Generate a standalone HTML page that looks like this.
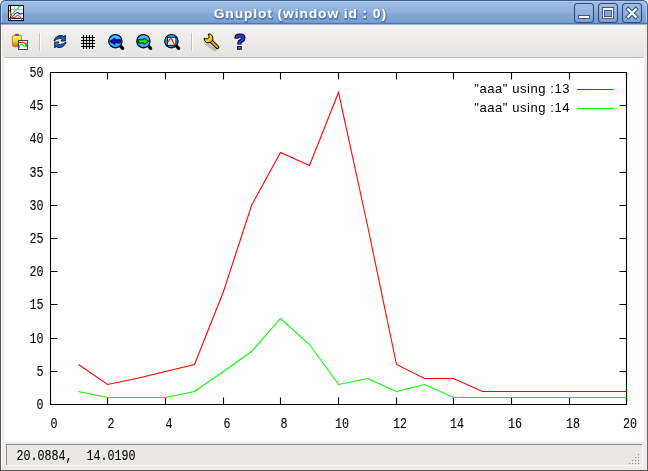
<!DOCTYPE html>
<html><head><meta charset="utf-8">
<style>
html,body{margin:0;padding:0;width:648px;height:471px;overflow:hidden;background:#fff}
svg{display:block;will-change:transform}
</style></head>
<body>
<svg width="648" height="471" viewBox="0 0 648 471">
<defs>
<linearGradient id="tb" x1="0" y1="0" x2="0" y2="1">
<stop offset="0" stop-color="#9dbde6"/>
<stop offset="0.5" stop-color="#8fb0dc"/>
<stop offset="0.55" stop-color="#84a8d7"/>
<stop offset="1" stop-color="#7a9fd1"/>
</linearGradient>
<linearGradient id="tool" x1="0" y1="0" x2="0" y2="1">
<stop offset="0" stop-color="#f4f3f1"/>
<stop offset="1" stop-color="#e4e3e0"/>
</linearGradient>
<linearGradient id="btn" x1="0" y1="0" x2="0" y2="1">
<stop offset="0" stop-color="#a3c0e8"/>
<stop offset="1" stop-color="#7b9fd2"/>
</linearGradient>
<linearGradient id="clip" x1="0" y1="0" x2="0" y2="1">
<stop offset="0" stop-color="#fbf27a"/>
<stop offset="0.45" stop-color="#f4d820"/>
<stop offset="1" stop-color="#d8640a"/>
</linearGradient>
<radialGradient id="lens" cx="0.5" cy="0.45" r="0.55">
<stop offset="0" stop-color="#38a8f8"/>
<stop offset="0.6" stop-color="#4cb6ff"/>
<stop offset="0.85" stop-color="#2294ee"/>
<stop offset="1" stop-color="#1478d0"/>
</radialGradient>
<linearGradient id="refr" x1="0" y1="0" x2="0" y2="1">
<stop offset="0" stop-color="#0a3fb0"/>
<stop offset="1" stop-color="#1a7cff"/>
</linearGradient>
<linearGradient id="refr2" x1="0" y1="1" x2="0" y2="0">
<stop offset="0" stop-color="#0a3fb0"/>
<stop offset="0.7" stop-color="#1a7cff"/>
<stop offset="1" stop-color="#20c0ff"/>
</linearGradient>
<linearGradient id="wr" x1="0" y1="0" x2="1" y2="1">
<stop offset="0" stop-color="#fff200"/>
<stop offset="0.6" stop-color="#ffd000"/>
<stop offset="1" stop-color="#f7a400"/>
</linearGradient>
</defs>
<!-- window frame background -->
<rect x="0" y="0" width="648" height="471" fill="#edecea"/>
<!-- title bar -->
<path d="M0 24V5.5Q0 0 5.5 0H642.5Q648 0 648 5.5V24Z" fill="#3f5f8a"/>
<path d="M1 24V6Q1 1 6 1H642Q647 1 647 6V24Z" fill="#aecaee"/>
<path d="M2 23V7Q2 2 7 2H641Q646 2 646 7V23Z" fill="url(#tb)"/>
<rect x="1" y="22" width="646" height="1" fill="#7097cb"/>
<rect x="1" y="23" width="646" height="1" fill="#4f76ad"/>
<rect x="1" y="24" width="646" height="1" fill="#a3b9d8"/>
<path d="M0 0H5.5Q0 0 0 5.5Z M648 0H642.5Q648 0 648 5.5Z" fill="#ffffff"/>
<!-- app icon -->
<rect x="8" y="5" width="16" height="16" fill="#000"/>
<rect x="9" y="6" width="14" height="14" fill="#fff"/>
<path d="M14.5 6V18M18.5 6V18M11 9.5H23M11 13.5H23" stroke="#c8c8d0" stroke-width="1"/>
<path d="M10.5 6V19.5M9 18.5H23" stroke="#000" stroke-width="1"/>
<path d="M9.8 16.2L20.2 6" stroke="#22dd44" stroke-width="1.1" fill="none"/>
<path d="M10.2 19.7Q14 14 17.3 12.4Q19 13 20.4 14.3Q21.5 14 22.5 12.8" stroke="#3030ff" stroke-width="1.05" fill="none"/>
<path d="M9.5 10.2Q11.5 17 13.6 17.8Q16 17.5 17.3 15.3Q19.5 15.5 20.5 17.5L21.8 19.6" stroke="#ff3030" stroke-width="1.05" fill="none"/>
<!-- title -->
<text transform="translate(300.8,18.5) scale(1.02,1)" text-anchor="middle" font-family="Liberation Sans" font-weight="bold" font-size="13.5" letter-spacing="0.9" fill="#3f68a5" stroke="#3f68a5" stroke-width="1.6" stroke-linejoin="round" opacity="0.7">Gnuplot (window id : 0)</text>
<text transform="translate(300.3,18.0) scale(1.02,1)" text-anchor="middle" font-family="Liberation Sans" font-weight="bold" font-size="13.5" letter-spacing="0.9" fill="#ffffff" stroke="#ffffff" stroke-width="0.1">Gnuplot (window id : 0)</text>
<!-- window buttons -->
<rect x="574.5" y="3.5" width="19" height="19" rx="3.2" fill="url(#btn)" stroke="#34507a" stroke-width="1.15"/>
<rect x="598.5" y="3.5" width="19" height="19" rx="3.2" fill="url(#btn)" stroke="#34507a" stroke-width="1.15"/>
<rect x="622.5" y="3.5" width="19" height="19" rx="3.2" fill="url(#btn)" stroke="#34507a" stroke-width="1.15"/>
<rect x="578" y="15" width="12" height="4" fill="#3d5b85"/>
<rect x="579" y="16" width="10" height="2" fill="#fff"/>
<rect x="602" y="7" width="12" height="12" fill="#3d5b85"/>
<rect x="603" y="8" width="10" height="10" fill="#fff"/>
<rect x="604" y="10" width="8" height="7" fill="#3d5b85"/>
<rect x="605" y="11" width="6" height="5" fill="#88aad9"/>
<path d="M628.2 9.2L635.8 16.8M635.8 9.2L628.2 16.8" stroke="#34507a" stroke-width="4.2" stroke-linecap="square"/>
<path d="M628.2 9.2L635.8 16.8M635.8 9.2L628.2 16.8" stroke="#fff" stroke-width="2.2" stroke-linecap="square"/>

<!-- side borders below title -->
<rect x="0" y="24" width="1" height="447" fill="#5d5a55"/>
<rect x="1" y="25" width="1" height="445" fill="#fbfbfa"/>
<rect x="647" y="24" width="1" height="447" fill="#6b6862"/>
<rect x="0" y="470" width="648" height="1" fill="#5d5a55"/>

<!-- toolbar -->
<rect x="4" y="25" width="640" height="32" fill="url(#tool)"/>
<rect x="4" y="57" width="640" height="1" fill="#bfbeba"/>
<!-- separators -->
<rect x="39" y="33" width="1" height="18" fill="#c4c3bf"/>
<rect x="40" y="33" width="1" height="18" fill="#fdfdfd"/>
<rect x="191" y="33" width="1" height="18" fill="#c4c3bf"/>
<rect x="192" y="33" width="1" height="18" fill="#fdfdfd"/>

<!-- copy icon -->
<rect x="12.3" y="35.3" width="9.4" height="11.4" rx="2" fill="url(#clip)" stroke="#8a6a30" stroke-width="0.7"/>
<rect x="15" y="33.8" width="4" height="2.2" rx="1" fill="#5a5a5a"/>
<rect x="18.5" y="40.5" width="9" height="9" fill="#fff" stroke="#333" stroke-width="0.9"/>
<path d="M19 42.4H23Q25.5 42.6 27 46.8" stroke="#ee1010" stroke-width="1.1" fill="none"/>
<path d="M19.2 48.5Q19.8 44 21 44Q22.5 44 23.3 45.5Q24.5 46.8 25.5 46Q26.5 45 27 42.6" stroke="#10dd10" stroke-width="1.1" fill="none"/>

<!-- refresh icon -->
<g stroke="#000" stroke-width="0.85" stroke-linejoin="round">
<path d="M54 40.9Q55.8 35.5 60.6 35.5Q62.9 35.5 64 36.6L65.3 35.1V41H60.9L62.5 39.4Q61.4 38.4 59.6 38.5Q56.6 38.8 54 40.9Z" fill="url(#refr)"/>
<path d="M66 42.1Q64.2 47.5 59.4 47.5Q57.1 47.5 56 46.4L54.7 47.9V42H59.1L57.5 43.6Q58.6 44.6 60.4 44.5Q63.4 44.2 66 42.1Z" fill="url(#refr2)"/>
</g>

<!-- grid icon -->
<rect x="80.5" y="34.5" width="15" height="15" rx="3" fill="#fff" opacity="0.85"/>
<path d="M83.5 35V49M86.5 35V49M89.5 35V49M92.5 35V49M81 37.5H95M81 40.5H95M81 43.5H95M81 46.5H95" stroke="#000" stroke-width="1.2"/>

<!-- zoom icons -->
<g>
<path d="M120.5 46.2L122.6 48.3" stroke="#000" stroke-width="3.2" stroke-linecap="round"/>
<circle cx="115.4" cy="41.2" r="6.7" fill="url(#lens)" stroke="#000" stroke-width="1.1"/>
<path d="M109.9 41.3L114.9 38.2V39.7H120.6V43H114.9V44.4Z" fill="#0000f0" stroke="#000" stroke-width="0.85" stroke-linejoin="round"/>
</g>
<g>
<path d="M148.5 46.2L150.6 48.3" stroke="#000" stroke-width="3.2" stroke-linecap="round"/>
<circle cx="143.4" cy="41.2" r="6.7" fill="url(#lens)" stroke="#000" stroke-width="1.1"/>
<path d="M148.9 41.3L143.9 38.2V39.7H138.2V43H143.9V44.4Z" fill="#00f000" stroke="#000" stroke-width="0.85" stroke-linejoin="round"/>
</g>
<g>
<path d="M176.5 46.2L178.6 48.3" stroke="#000" stroke-width="3.2" stroke-linecap="round"/>
<circle cx="171.4" cy="41.2" r="6.7" fill="url(#lens)" stroke="#000" stroke-width="1.1"/>
<rect x="167.3" y="37.3" width="8.6" height="8" fill="#fff" stroke="#000" stroke-width="1"/>
<path d="M168 41.8Q168.8 41 169.5 39.5Q170.5 38.3 171.5 39Q172.5 40 173 42Q173.5 43.5 175 44.6" stroke="#ff0000" stroke-width="1.1" fill="none"/>
</g>

<!-- wrench -->
<g opacity="0.9">
<path d="M206 43.5L215 50" stroke="#bdb6a2" stroke-width="3.2" stroke-linecap="round"/>
<path d="M203.8 42Q206 45.5 209 45.3Q211 44.6 211.5 43L207 41Z" fill="#c9c2ae"/>
</g>
<path d="M211 41L217.3 47.1" stroke="#000" stroke-width="4" stroke-linecap="round"/>
<path d="M211 41L217.3 47.1" stroke="#f7a400" stroke-width="2.1" stroke-linecap="round"/>
<path d="M204 38.2Q204.6 42.6 208.2 42.8Q211.2 42.8 212.8 40Q213.6 36.6 211 34.4Q209.8 33.8 208.2 34L209.2 36.9Q208.8 38.5 207.4 38.8Q205.8 39 204 38.2Z" fill="url(#wr)" stroke="#000" stroke-width="1" stroke-linejoin="round"/>

<!-- help -->
<path d="M236.6 38.8V37.2Q236.6 35.6 240 35.6Q243.4 35.6 243.4 37.9Q243.4 39.6 241.5 40.6Q239.4 41.7 239.4 43.5V44.4" fill="none" stroke="#000" stroke-width="4.2" stroke-linejoin="round"/>
<path d="M236.6 38.8V37.2Q236.6 35.6 240 35.6Q243.4 35.6 243.4 37.9Q243.4 39.6 241.5 40.6Q239.4 41.7 239.4 43.5V44.4" fill="none" stroke="#3434f4" stroke-width="2.2" stroke-linejoin="round"/>
<rect x="237.6" y="46.6" width="3.6" height="2.6" fill="#7878ff" stroke="#000" stroke-width="1.1"/>

<!-- canvas -->
<rect x="4" y="58" width="640" height="384" fill="#ffffff"/>

<g>
<path d="M50.5 72.5H626.5V404.5H50.5Z" fill="none" stroke="#000" stroke-width="1.1"/>
<path d="M50.50 404.5V397.5 M50.50 72.5V79.5 M107.50 404.5V397.5 M107.50 72.5V79.5 M165.50 404.5V397.5 M165.50 72.5V79.5 M223.50 404.5V397.5 M223.50 72.5V79.5 M280.50 404.5V397.5 M280.50 72.5V79.5 M338.50 404.5V397.5 M338.50 72.5V79.5 M396.50 404.5V397.5 M396.50 72.5V79.5 M453.50 404.5V397.5 M453.50 72.5V79.5 M511.50 404.5V397.5 M511.50 72.5V79.5 M569.50 404.5V397.5 M569.50 72.5V79.5 M626.50 404.5V397.5 M626.50 72.5V79.5 M50.5 404.50H57.5 M626.5 404.50H619.5 M50.5 371.50H57.5 M626.5 371.50H619.5 M50.5 338.50H57.5 M626.5 338.50H619.5 M50.5 304.50H57.5 M626.5 304.50H619.5 M50.5 271.50H57.5 M626.5 271.50H619.5 M50.5 238.50H57.5 M626.5 238.50H619.5 M50.5 205.50H57.5 M626.5 205.50H619.5 M50.5 172.50H57.5 M626.5 172.50H619.5 M50.5 138.50H57.5 M626.5 138.50H619.5 M50.5 105.50H57.5 M626.5 105.50H619.5 M50.5 72.50H57.5 M626.5 72.50H619.5" stroke="#000" stroke-width="1.1" fill="none"/>
<polyline points="78.50,364.50 107.50,384.50 136.50,378.50 165.50,371.50 194.50,364.50 223.50,291.50 251.50,205.50 280.50,152.50 309.50,165.50 338.50,92.50 367.50,225.50 396.50,364.50 424.50,378.50 453.50,378.50 482.50,391.50 511.50,391.50 540.50,391.50 569.50,391.50 597.50,391.50 626.50,391.50" fill="none" stroke="#ff0000" stroke-width="1.1" stroke-linejoin="miter"/>
<polyline points="78.50,391.50 107.50,397.50 136.50,397.50 165.50,397.50 194.50,391.50 223.50,371.50 251.50,351.50 280.50,318.50 309.50,344.50 338.50,384.50 367.50,378.50 396.50,391.50 424.50,384.50 453.50,397.50 482.50,397.50 511.50,397.50 540.50,397.50 569.50,397.50 597.50,397.50 626.50,397.50" fill="none" stroke="#00ff00" stroke-width="1.1"/>
<g font-family="Liberation Mono" font-size="14.96" fill="#000" stroke="#000" stroke-width="0.1"><text transform="translate(43.4,408.90) scale(0.78,0.99)" text-anchor="end">0</text><text transform="translate(43.4,375.90) scale(0.78,0.99)" text-anchor="end">5</text><text transform="translate(43.4,342.90) scale(0.78,0.99)" text-anchor="end">10</text><text transform="translate(43.4,308.90) scale(0.78,0.99)" text-anchor="end">15</text><text transform="translate(43.4,275.90) scale(0.78,0.99)" text-anchor="end">20</text><text transform="translate(43.4,242.90) scale(0.78,0.99)" text-anchor="end">25</text><text transform="translate(43.4,209.90) scale(0.78,0.99)" text-anchor="end">30</text><text transform="translate(43.4,176.90) scale(0.78,0.99)" text-anchor="end">35</text><text transform="translate(43.4,142.90) scale(0.78,0.99)" text-anchor="end">40</text><text transform="translate(43.4,109.90) scale(0.78,0.99)" text-anchor="end">45</text><text transform="translate(43.4,76.90) scale(0.78,0.99)" text-anchor="end">50</text><text transform="translate(54.10,428) scale(0.78,0.99)" text-anchor="middle">0</text><text transform="translate(111.10,428) scale(0.78,0.99)" text-anchor="middle">2</text><text transform="translate(169.10,428) scale(0.78,0.99)" text-anchor="middle">4</text><text transform="translate(227.10,428) scale(0.78,0.99)" text-anchor="middle">6</text><text transform="translate(284.10,428) scale(0.78,0.99)" text-anchor="middle">8</text><text transform="translate(342.10,428) scale(0.78,0.99)" text-anchor="middle">10</text><text transform="translate(400.10,428) scale(0.78,0.99)" text-anchor="middle">12</text><text transform="translate(457.10,428) scale(0.78,0.99)" text-anchor="middle">14</text><text transform="translate(515.10,428) scale(0.78,0.99)" text-anchor="middle">16</text><text transform="translate(573.10,428) scale(0.78,0.99)" text-anchor="middle">18</text><text transform="translate(630.10,428) scale(0.78,0.99)" text-anchor="middle">20</text></g>
<g font-family="Liberation Sans" font-size="13" fill="#000" letter-spacing="0.56"><text x="570" y="93" text-anchor="end">"aaa" using :13</text><text x="570" y="112" text-anchor="end">"aaa" using :14</text></g>
<path d="M577 89.5H613" stroke="#ff0000" stroke-width="1.1"/>
<path d="M577 108.5H613" stroke="#00ff00" stroke-width="1.1"/>
</g>

<!-- status bar -->
<rect x="6" y="444" width="637" height="22" fill="#e9e8e6"/>
<rect x="6" y="444" width="637" height="1" fill="#8f8e8a"/>
<rect x="6" y="444" width="1" height="22" fill="#8f8e8a"/>
<rect x="6" y="465" width="637" height="1" fill="#ffffff"/>
<rect x="642" y="444" width="1" height="22" fill="#ffffff"/>
<g fill="#ffffff"><rect x="639" y="455" width="1.2" height="1.2"/><rect x="636" y="458" width="1.2" height="1.2"/><rect x="639" y="458" width="1.2" height="1.2"/><rect x="633" y="461" width="1.2" height="1.2"/><rect x="636" y="461" width="1.2" height="1.2"/><rect x="639" y="461" width="1.2" height="1.2"/><rect x="630" y="464" width="1.2" height="1.2"/><rect x="633" y="464" width="1.2" height="1.2"/><rect x="636" y="464" width="1.2" height="1.2"/><rect x="639" y="464" width="1.2" height="1.2"/></g><g fill="#93928e"><rect x="638" y="454" width="1.2" height="1.2"/><rect x="635" y="457" width="1.2" height="1.2"/><rect x="638" y="457" width="1.2" height="1.2"/><rect x="632" y="460" width="1.2" height="1.2"/><rect x="635" y="460" width="1.2" height="1.2"/><rect x="638" y="460" width="1.2" height="1.2"/><rect x="629" y="463" width="1.2" height="1.2"/><rect x="632" y="463" width="1.2" height="1.2"/><rect x="635" y="463" width="1.2" height="1.2"/><rect x="638" y="463" width="1.2" height="1.2"/></g>
<text transform="translate(16.5,459.6) scale(0.78,0.99)" font-family="Liberation Mono" font-size="14.96" fill="#000" stroke="#000" stroke-width="0.1" xml:space="preserve">20.0884,  14.0190</text>
</svg>
</body></html>
